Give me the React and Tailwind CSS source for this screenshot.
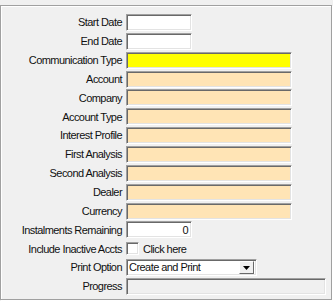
import React from 'react';

const sunken = 'border border-t-[#a0a0a0] border-l-[#a0a0a0] border-b-white border-r-white shadow-[inset_1px_1px_0_#696969,inset_-1px_-1px_0_#e3e3e3]';

const rows = [
  { label: 'Start Date', kind: 'short' },
  { label: 'End Date', kind: 'short' },
  { label: 'Communication Type', kind: 'yellow' },
  { label: 'Account', kind: 'beige' },
  { label: 'Company', kind: 'beige' },
  { label: 'Account Type', kind: 'beige' },
  { label: 'Interest Profile', kind: 'beige' },
  { label: 'First Analysis', kind: 'beige' },
  { label: 'Second Analysis', kind: 'beige' },
  { label: 'Dealer', kind: 'beige' },
  { label: 'Currency', kind: 'beige' },
  { label: 'Instalments Remaining', kind: 'number' },
  { label: 'Include Inactive Accts', kind: 'check' },
  { label: 'Print Option', kind: 'select' },
  { label: 'Progress', kind: 'progress' },
];

function Field({ kind }) {
  if (kind === 'short') return <div className={`w-[66px] h-full bg-white ${sunken}`} />;
  if (kind === 'yellow') return <div className={`w-[166px] h-full bg-[#ffff00] ${sunken}`} />;
  if (kind === 'beige') return <div className={`w-[166px] h-full bg-[#ffe4b5] ${sunken}`} />;
  if (kind === 'number')
    return (
      <div className={`w-[66px] h-full bg-white ${sunken} flex items-center justify-end pr-[3px]`}>0</div>
    );
  if (kind === 'check')
    return (
      <div className="flex items-center h-full">
        <div className={`w-[13px] h-[13px] bg-white ${sunken}`} />
        <span className="ml-[4px]">Click here</span>
      </div>
    );
  if (kind === 'select')
    return (
      <div className={`w-[131px] h-full bg-white ${sunken} flex items-center pl-[2px] pr-[2px]`}>
        <span className="flex-1">Create and Print</span>
        <div className="w-[15px] h-[13px] bg-[#f0f0f0] border border-t-white border-l-white border-b-[#696969] border-r-[#696969] flex items-center justify-center">
          <svg width="7" height="4" viewBox="0 0 7 4"><path d="M0 0h7L3.5 4z" fill="#000" /></svg>
        </div>
      </div>
    );
  return <div className={`w-[200px] h-full bg-[#f0f0f0] ${sunken}`} />;
}

export default function App() {
  return (
    <div className="w-[333px] h-[301px] bg-[#f0f0f0] pt-[5px] text-[11px] tracking-[-0.55px] text-[#111]" style={{ fontFamily: '"Liberation Sans", Arial, sans-serif' }}>
      <div className="w-[332px] h-[295px] border border-[#a0a0a0] shadow-[inset_1px_1px_0_#fff,1px_1px_0_#fff] pt-[8px]">
        <div className="flex flex-col gap-[1.86px]">
          {rows.map((r) => (
            <div key={r.label} className="flex items-center h-[17px]">
              <div className="w-[121px] text-right whitespace-nowrap">{r.label}</div>
              <div className="ml-[4px] h-full">
                <Field kind={r.kind} />
              </div>
            </div>
          ))}
        </div>
      </div>
    </div>
  );
}
